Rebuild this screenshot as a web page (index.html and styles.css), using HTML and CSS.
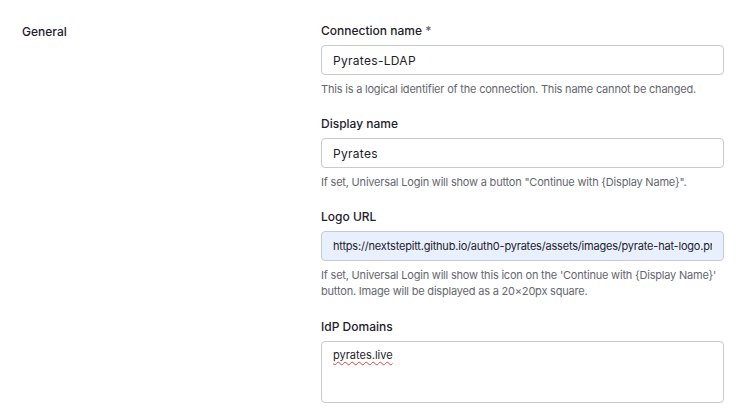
FILE: index.html
```html
<!DOCTYPE html>
<html>
<head>
<meta charset="utf-8">
<link rel="stylesheet" href="styles.css">
</head>
<body>
<div class="page">
  <div class="section-title">General</div>
  <div class="fields">
    <div class="field">
      <label class="label">Connection name <span class="req">*</span></label>
      <div class="input">Pyrates-LDAP</div>
      <div class="help">This is a logical identifier of the connection. This name cannot be changed.</div>
    </div>
    <div class="field">
      <label class="label">Display name</label>
      <div class="input">Pyrates</div>
      <div class="help">If set, Universal Login will show a button "Continue with {Display Name}".</div>
    </div>
    <div class="field">
      <label class="label">Logo URL</label>
      <div class="input autofill"><span class="clip">https://nextstepitt.github.io/auth0-pyrates/assets/images/pyrate-hat-logo.png</span></div>
      <div class="help">If set, Universal Login will show this icon on the 'Continue with {Display Name}' button. Image will be displayed as a 20×20px square.</div>
    </div>
    <div class="field field-last">
      <label class="label">IdP Domains</label>
      <div class="textarea"><span class="spell">pyrates.live</span></div>
    </div>
  </div>
</div>
</body>
</html>
```
FILE: styles.css
```css
html, body {
  margin: 0;
  padding: 0;
  background: #ffffff;
}
body {
  font-family: Inter, "Noto Sans", sans-serif;
  color: #1e212a;
  font-size: 12px;
}
.page {
  display: flex;
  padding: 24px 22px 0 22px;
}
.section-title {
  width: 299px;
  font-size: 12px;
  font-weight: 500;
  line-height: 16px;
  color: #1e212a;
}
.fields {
  width: 403px;
  display: flex;
  flex-direction: column;
  gap: 20px;
}
.field {
  display: flex;
  flex-direction: column;
}
.field-last {
  margin-top: 1px;
}
.label {
  font-size: 12px;
  font-weight: 500;
  line-height: 14px;
  margin-bottom: 7px;
}
.req {
  color: #65676e;
}
.input {
  box-sizing: border-box;
  height: 30px;
  border: 1px solid #c9cace;
  border-radius: 4px;
  padding: 0 11px;
  display: flex;
  align-items: center;
  font-size: 12px;
  letter-spacing: 0.3px;
  overflow: hidden;
  white-space: nowrap;
}
.input.autofill {
  background: #e8f0fe;
  font-size: 11px;
  letter-spacing: -0.2px;
}
.clip {
  overflow: hidden;
  white-space: nowrap;
}
.help {
  margin-top: 6px;
  font-size: 11px;
  letter-spacing: -0.2px;
  line-height: 16px;
  color: #65676e;
}
.textarea {
  box-sizing: border-box;
  height: 62px;
  border: 1px solid #c9cace;
  border-radius: 4px;
  padding: 5px 11px;
  font-size: 11px;
  line-height: 16px;
}
.spell {
  text-decoration: underline wavy #e0463b;
  text-decoration-thickness: 1px;
  text-underline-offset: 2px;
}
```
